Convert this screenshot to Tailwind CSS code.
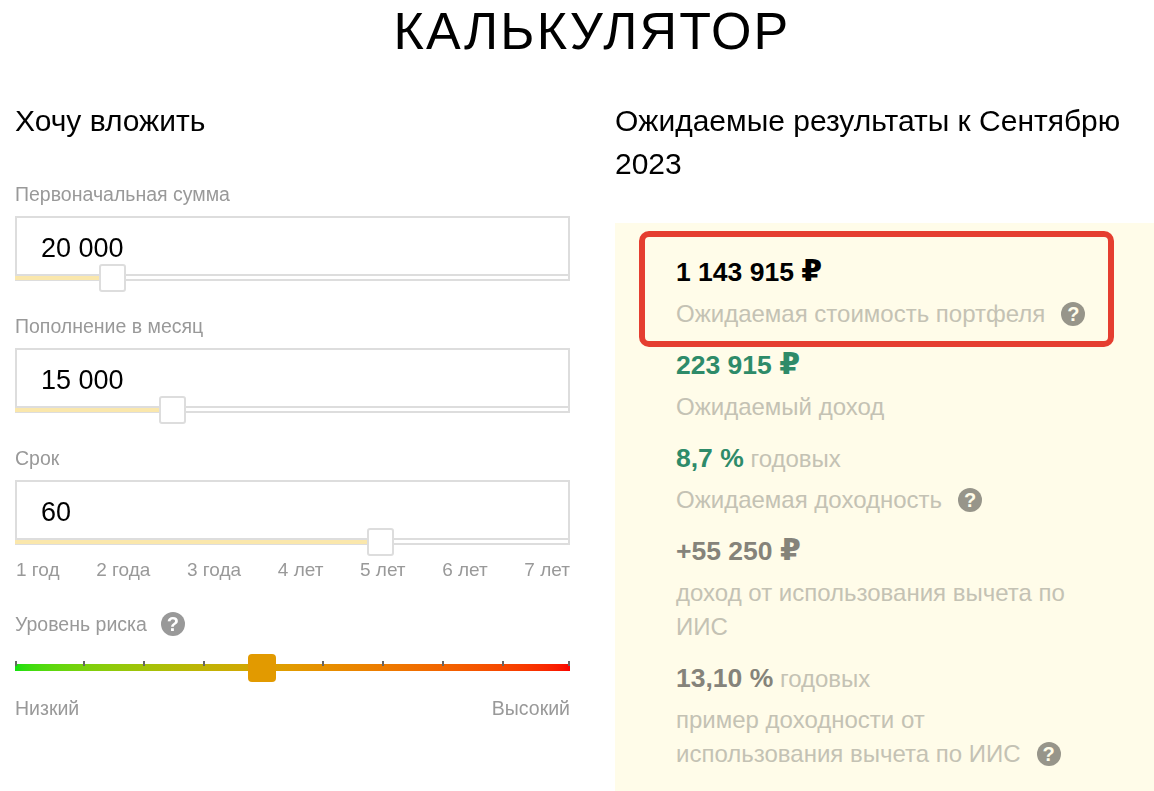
<!DOCTYPE html>
<html lang="ru"><head><meta charset="utf-8">
<script src="https://cdn.jsdelivr.net/npm/@tailwindcss/browser@4"></script>
</head>
<body class="bg-white overflow-hidden">
<div class="w-[1154px] h-[791px] overflow-hidden font-['Liberation_Sans',Arial,sans-serif] text-black blur-[0.4px]">
  <h1 class="h-[64px] pl-[30px] text-center text-[52px] tracking-[2.2px] leading-[62px] font-normal">КАЛЬКУЛЯТОР</h1>
  <div class="flex">
    <div class="w-[555px] ml-[15px] mt-[35px] shrink-0">
      <h2 class="text-[30px] leading-[43px] font-normal">Хочу вложить</h2>

      <div class="mt-[40px] h-[24px] text-[19.5px] leading-[24px] text-[#999]">Первоначальная сумма</div>
      <div class="relative mt-[10px] h-[65px] border-2 border-[#ddd] pl-[24px] pt-[12px] text-[27px] leading-[36px]">20 000
        <div class="absolute left-[-2px] right-[-2px] bottom-[-2px] h-[7px] border-2 border-[#ddd] bg-white"></div>
        <div class="absolute left-[-2px] bottom-[-1px] h-[4px] w-[86px] bg-[#fae7ac]"></div>
        <div class="absolute left-[82px] bottom-[-13px] h-[28px] w-[27px] rounded-[3px] border-2 border-[#ddd] bg-white"></div>
      </div>

      <div class="mt-[33px] h-[24px] text-[19.5px] leading-[24px] text-[#999]">Пополнение в месяц</div>
      <div class="relative mt-[10px] h-[65px] border-2 border-[#ddd] pl-[24px] pt-[12px] text-[27px] leading-[36px]">15 000
        <div class="absolute left-[-2px] right-[-2px] bottom-[-2px] h-[7px] border-2 border-[#ddd] bg-white"></div>
        <div class="absolute left-[-2px] bottom-[-1px] h-[4px] w-[146px] bg-[#fae7ac]"></div>
        <div class="absolute left-[142px] bottom-[-13px] h-[28px] w-[27px] rounded-[3px] border-2 border-[#ddd] bg-white"></div>
      </div>

      <div class="mt-[33px] h-[24px] text-[19.5px] leading-[24px] text-[#999]">Срок</div>
      <div class="relative mt-[10px] h-[65px] border-2 border-[#ddd] pl-[24px] pt-[12px] text-[27px] leading-[36px]">60
        <div class="absolute left-[-2px] right-[-2px] bottom-[-2px] h-[7px] border-2 border-[#ddd] bg-white"></div>
        <div class="absolute left-[-2px] bottom-[-1px] h-[4px] w-[354px] bg-[#fae7ac]"></div>
        <div class="absolute left-[350px] bottom-[-13px] h-[28px] w-[27px] rounded-[3px] border-2 border-[#ddd] bg-white"></div>
      </div>
      <div class="mt-[13px] flex justify-between text-[19px] leading-[24px] text-[#999]">
        <span class="ml-[1px]">1 год</span><span>2 года</span><span>3 года</span><span>4 лет</span><span>5 лет</span><span>6 лет</span><span>7 лет</span>
      </div>

      <div class="mt-[30px] flex items-center gap-[14px] h-[24px] text-[19.5px] leading-[24px] text-[#999]">Уровень риска
        <span class="flex h-[24px] w-[24px] items-center justify-center rounded-full bg-[#999] text-[20px] font-bold text-white">?</span>
      </div>
      <div class="relative mt-[18px] h-[28px]">
        <div class="absolute left-0 right-0 top-[10px] h-[7px] bg-gradient-to-r from-[#10e010] via-[#e29a00] to-[#fa0000]"></div>
        <span class="absolute left-[0px] top-[7px] h-[5px] w-[2px] bg-[#666]"></span>
        <span class="absolute left-[68px] top-[7px] h-[5px] w-[2px] bg-[#666]"></span>
        <span class="absolute left-[128px] top-[7px] h-[5px] w-[2px] bg-[#666]"></span>
        <span class="absolute left-[188px] top-[7px] h-[5px] w-[2px] bg-[#666]"></span>
        <span class="absolute left-[307px] top-[7px] h-[5px] w-[2px] bg-[#666]"></span>
        <span class="absolute left-[367px] top-[7px] h-[5px] w-[2px] bg-[#666]"></span>
        <span class="absolute left-[427px] top-[7px] h-[5px] w-[2px] bg-[#666]"></span>
        <span class="absolute left-[487px] top-[7px] h-[5px] w-[2px] bg-[#666]"></span>
        <span class="absolute left-[553px] top-[7px] h-[5px] w-[2px] bg-[#666]"></span>
        <div class="absolute left-[233px] top-0 h-[28px] w-[28px] rounded-[4px] bg-[#e29a00]"></div>
      </div>
      <div class="mt-[14px] flex justify-between text-[19.5px] leading-[24px] text-[#999]"><span>Низкий</span><span>Высокий</span></div>
    </div>

    <div class="ml-[45px] w-[539px] mt-[35px] shrink-0">
      <h2 class="pr-[20px] text-[30px] leading-[43px] font-normal">Ожидаемые результаты к Сентябрю 2023</h2>
      <div class="relative mt-[38px] h-[568px] bg-[#fffce9] pl-[61px] text-[24px] text-[#c4c2b4]">
        <div class="absolute left-[24px] top-[8px] h-[116px] w-[475px] rounded-[10px] border-[6px] border-[#e53e30]"></div>
        <div class="pt-[32px] h-[67px] text-[26.5px] leading-[35px] font-bold text-black">1 143 915 <span class="font-['DejaVu_Sans'] text-[30px] leading-[0]">₽</span></div>
        <div class="mt-[7px] flex items-center gap-[16px] h-[34px] leading-[34px]">Ожидаемая стоимость портфеля
          <span class="flex h-[24px] w-[24px] items-center justify-center rounded-full bg-[#97958a] text-[20px] font-bold text-[#fffce9]">?</span></div>
        <div class="mt-[17px] h-[35px] text-[26.5px] leading-[35px] font-bold text-[#2e8b69]">223 915 <span class="font-['DejaVu_Sans'] text-[30px] leading-[0]">₽</span></div>
        <div class="mt-[7px] h-[34px] leading-[34px]">Ожидаемый доход</div>
        <div class="mt-[17px] h-[35px] leading-[35px]"><b class="text-[26.5px] text-[#2e8b69]">8,7 %</b> годовых</div>
        <div class="mt-[7px] flex items-center gap-[16px] h-[34px] leading-[34px]">Ожидаемая доходность
          <span class="flex h-[24px] w-[24px] items-center justify-center rounded-full bg-[#97958a] text-[20px] font-bold text-[#fffce9]">?</span></div>
        <div class="mt-[17px] h-[35px] text-[26.5px] leading-[35px] font-bold text-[#85837a]">+55 250 <span class="font-['DejaVu_Sans'] text-[30px] leading-[0]">₽</span></div>
        <div class="mt-[7px] w-[420px] leading-[34px]">доход от использования вычета по ИИС</div>
        <div class="mt-[17px] h-[35px] leading-[35px]"><b class="text-[26.5px] text-[#85837a]">13,10 %</b> годовых</div>
        <div class="mt-[7px] leading-[34px]">пример доходности от</div>
        <div class="flex items-center gap-[16px] h-[34px] leading-[34px]">использования вычета по ИИС
          <span class="flex h-[24px] w-[24px] items-center justify-center rounded-full bg-[#97958a] text-[20px] font-bold text-[#fffce9]">?</span></div>
      </div>
    </div>
  </div>
</div>
</body></html>
